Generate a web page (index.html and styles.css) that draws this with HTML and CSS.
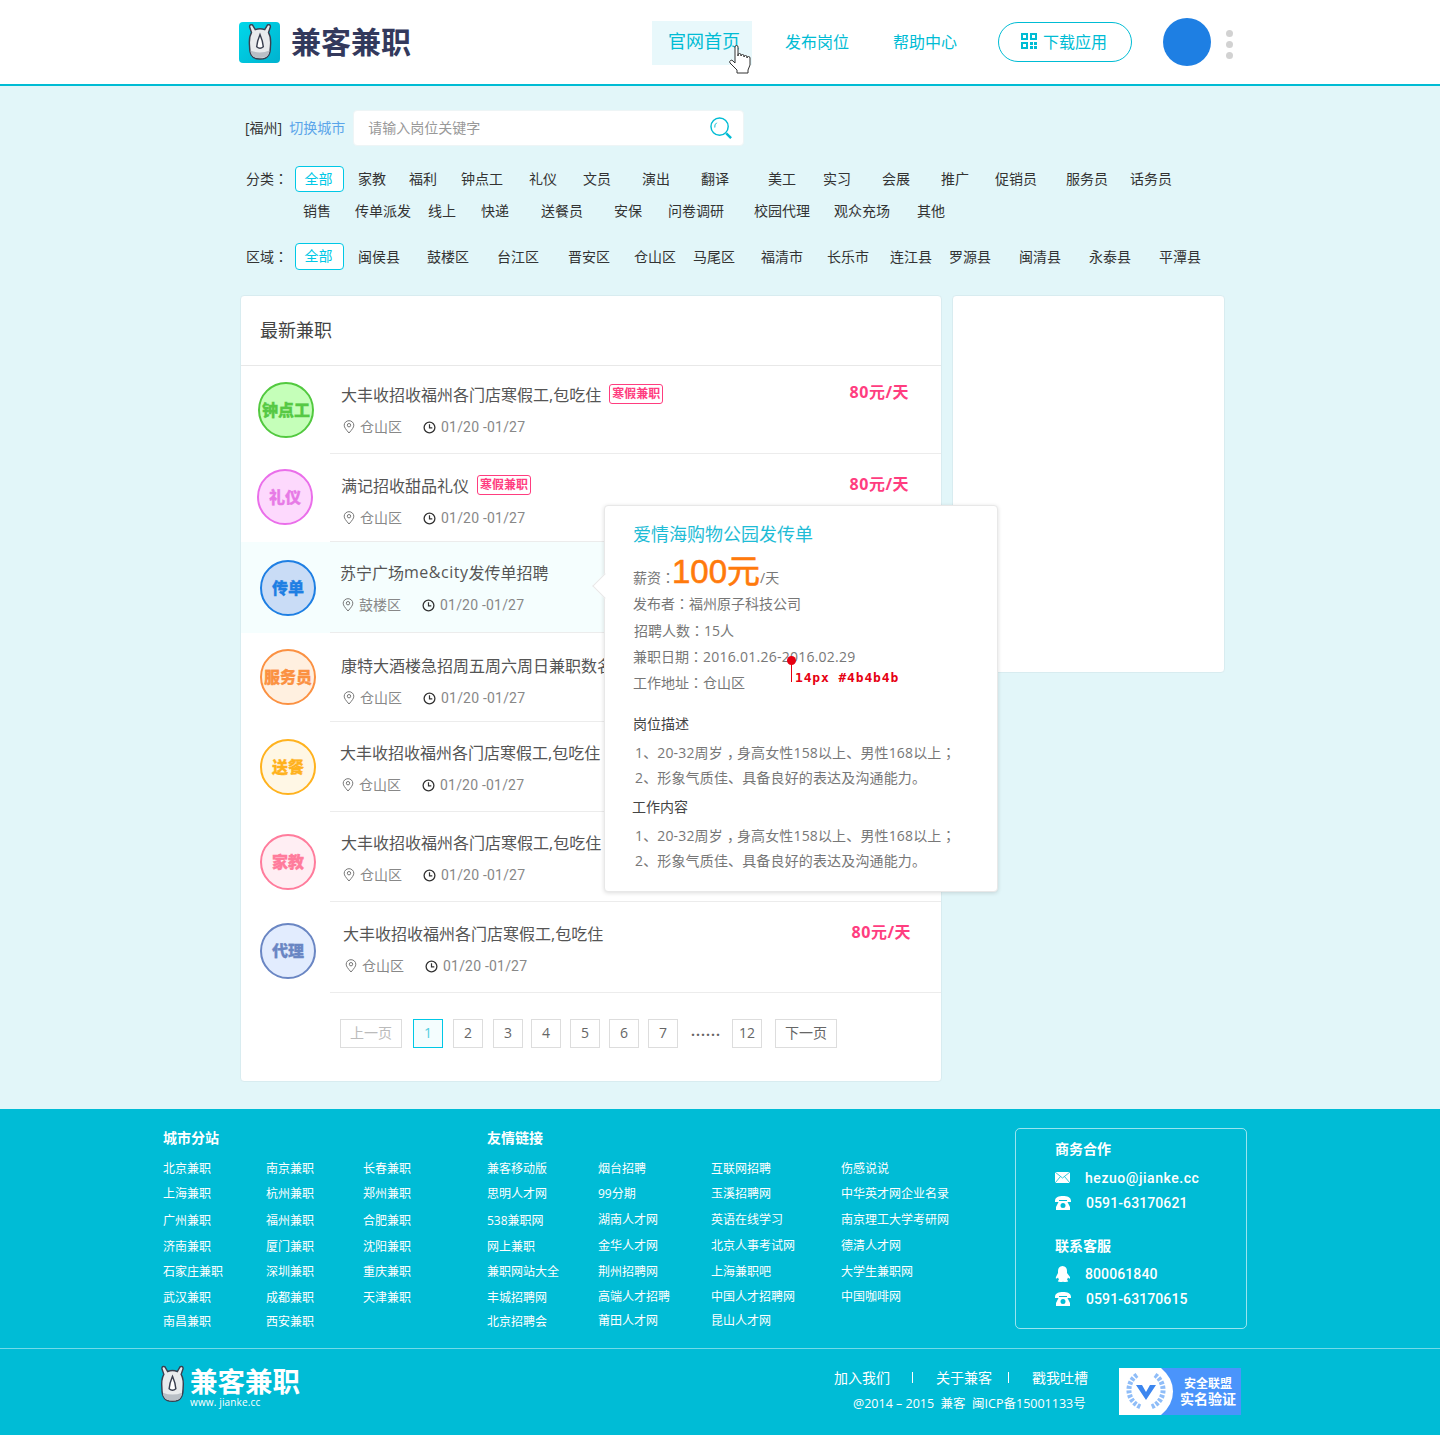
FILE: index.html
```html
<!DOCTYPE html>
<html lang="zh-CN">
<head>
    <meta charset="UTF-8">
    <meta name="viewport" content="width=device-width, initial-scale=1.0">
    <title>兼客兼职</title>
    <link rel="stylesheet" href="styles.css">
</head>
<body>
    <svg class="defs" width="0" height="0">
        <symbol id="rhino" viewBox="0 0 26 38">
            <path d="M4 9L2 3Q2 0 5 1L8 6Q13 4 18 6L21 1Q24 0 24 3L22 9Q25 14 24 24Q24 30 22 33Q20 37 13 37Q6 37 4 33Q2 30 2 24Q1 14 4 9Z" fill="#e9ebed" stroke="#3a3f4f" stroke-width="1.5"/>
            <path d="M3 28Q13 32 23 28Q23 36 13 36Q3 36 3 28Z" fill="#b9bfc6"/>
            <path d="M13 11Q10 18 9.5 24Q13 27 16.5 24Q16 18 13 11Z" fill="#fff" stroke="#3a3f4f" stroke-width="1.5"/>
        </symbol>
        <symbol id="pin" viewBox="0 0 12 14">
            <path d="M6 13C3 9.500 1.200 7.500 1.200 5.200a4.800 4.500 0 0 1 9.600 0C10.800 7.500 9 9.500 6 13Z" fill="none" stroke="#777" stroke-width="1"/>
            <circle cx="6" cy="5.200" r="1.700" fill="none" stroke="#777" stroke-width="1"/>
        </symbol>
        <symbol id="clock" viewBox="0 0 13 13">
            <circle cx="6.500" cy="6.500" r="5.400" fill="none" stroke="#333" stroke-width="1.300"/>
            <path d="M6.500 3.200V6.800H9.300" fill="none" stroke="#333" stroke-width="1.200"/>
        </symbol>
        <symbol id="phone" viewBox="0 0 16 14">
            <path d="M0 5C0 1 4 0 8 0s8 1 8 5v1h-4V4H4v2H0Z" fill="#fff"/>
            <path fill-rule="evenodd" d="M4 5h8l3 6v3H1v-3Zm4 2a2.500 2.500 0 1 0 0 5 2.500 2.500 0 0 0 0-5Z" fill="#fff"/>
        </symbol>
    </svg>

    <header class="top">
        <a class="logo">
            <span class="logo-icon"><svg width="26" height="36"><use href="#rhino"/></svg></span>
            <span class="logo-text">兼客兼职</span>
        </a>
        <nav class="nav">
            <a class="nav-item active">官网首页</a>
            <a class="nav-item second">发布岗位</a>
            <a class="nav-item third">帮助中心</a>
        </nav>
        <a class="download">
            <svg width="16" height="16" viewBox="0 0 16 16" fill="#00bcd4">
                <path fill-rule="evenodd" d="M0 0h7v7H0ZM2 2v3h3V2ZM9 0h7v7H9ZM11 2v3h3V2ZM0 9h7v7H0ZM2 11v3h3v-3Z"/>
                <path d="M9 9h3v3H9ZM13 9h3v3h-3ZM9 13h3v3H9ZM13 13h3v3h-3Z"/>
            </svg>
            下载应用
        </a>
        <span class="avatar"></span>
        <span class="dots"><i></i><i></i><i></i></span>
        <svg class="cursor" width="24" height="31" viewBox="0 0 24 31">
            <path d="M7 3a1.500 1.500 0 0 1 3 0v9-1a1.500 1.500 0 0 1 3 0v1a1.500 1.500 0 0 1 3 0v1a1.500 1.500 0 0 1 3 0v1a1.500 1.500 0 0 1 3 0v7l-2 5v3H9v-3L2 19a1.700 1.700 0 0 1 3-2l2 2Z" fill="#fff" stroke="#333" stroke-width="1"/>
        </svg>
    </header>

    <main class="main">
        <div class="search-row">
            <span class="city">[福州]</span>
            <a class="switch">切换城市</a>
            <div class="search-box">
                <span class="placeholder">请输入岗位关键字</span>
                <svg width="23" height="23" viewBox="0 0 24 24" fill="none" stroke="#00bcd4">
                    <circle cx="10" cy="10" r="9" stroke-width="1.500"/>
                    <path d="M5 11a5 5 0 0 1 2-5" stroke-width="1"/>
                    <path d="M17 17l5 5" stroke-width="2.500"/>
                </svg>
            </div>
        </div>

        <div class="filter filter-one">
            <span>分类<b class="tc">：</b></span><a class="on">全部</a><a>家教</a><a>福利</a><a>钟点工</a><a>礼仪</a><a>文员</a><a>演出</a><a>翻译</a><a>美工</a><a>实习</a><a>会展</a><a>推广</a><a>促销员</a><a>服务员</a><a>话务员</a>
        </div>
        <div class="filter filter-two">
            <a>销售</a><a>传单派发</a><a>线上</a><a>快递</a><a>送餐员</a><a>安保</a><a>问卷调研</a><a>校园代理</a><a>观众充场</a><a>其他</a>
        </div>
        <div class="filter filter-three">
            <span>区域<b class="tc">：</b></span><a class="on">全部</a><a>闽侯县</a><a>鼓楼区</a><a>台江区</a><a>晋安区</a><a>仓山区</a><a>马尾区</a><a>福清市</a><a>长乐市</a><a>连江县</a><a>罗源县</a><a>闽清县</a><a>永泰县</a><a>平潭县</a>
        </div>

        <div class="content">
            <section class="card list">
                <h2 class="list-title">最新兼职</h2>
                <div class="jobs">
                    <article class="job">
                        <div class="badge-col"><span class="circle green">钟点工</span></div>
                        <div class="job-body">
                            <div class="job-main">
                                <h3>大丰收招收福州各门店寒假工,包吃住<em>寒假兼职</em></h3>
                                <p class="meta"><svg width="12" height="14"><use href="#pin"/></svg><span class="place">仓山区</span><svg width="13" height="13"><use href="#clock"/></svg><span class="date">01/20 -01/27</span></p>
                            </div>
                            <b class="pay">80元/天</b>
                        </div>
                    </article>
                    <article class="job">
                        <div class="badge-col"><span class="circle pink">礼仪</span></div>
                        <div class="job-body">
                            <div class="job-main">
                                <h3>满记招收甜品礼仪<em>寒假兼职</em></h3>
                                <p class="meta"><svg width="12" height="14"><use href="#pin"/></svg><span class="place">仓山区</span><svg width="13" height="13"><use href="#clock"/></svg><span class="date">01/20 -01/27</span></p>
                            </div>
                            <b class="pay">80元/天</b>
                        </div>
                    </article>
                    <article class="job hover">
                        <div class="badge-col"><span class="circle blue">传单</span></div>
                        <div class="job-body">
                            <div class="job-main">
                                <h3>苏宁广场<span class="latin">me&amp;city</span>发传单招聘</h3>
                                <p class="meta"><svg width="12" height="14"><use href="#pin"/></svg><span class="place">鼓楼区</span><svg width="13" height="13"><use href="#clock"/></svg><span class="date">01/20 -01/27</span></p>
                            </div>
                        </div>
                    </article>
                    <article class="job">
                        <div class="badge-col"><span class="circle orange">服务员</span></div>
                        <div class="job-body">
                            <div class="job-main">
                                <h3>康特大酒楼急招周五周六周日兼职数名</h3>
                                <p class="meta"><svg width="12" height="14"><use href="#pin"/></svg><span class="place">仓山区</span><svg width="13" height="13"><use href="#clock"/></svg><span class="date">01/20 -01/27</span></p>
                            </div>
                        </div>
                    </article>
                    <article class="job">
                        <div class="badge-col"><span class="circle yellow">送餐</span></div>
                        <div class="job-body">
                            <div class="job-main">
                                <h3>大丰收招收福州各门店寒假工,包吃住</h3>
                                <p class="meta"><svg width="12" height="14"><use href="#pin"/></svg><span class="place">仓山区</span><svg width="13" height="13"><use href="#clock"/></svg><span class="date">01/20 -01/27</span></p>
                            </div>
                        </div>
                    </article>
                    <article class="job">
                        <div class="badge-col"><span class="circle rose">家教</span></div>
                        <div class="job-body">
                            <div class="job-main">
                                <h3>大丰收招收福州各门店寒假工,包吃住</h3>
                                <p class="meta"><svg width="12" height="14"><use href="#pin"/></svg><span class="place">仓山区</span><svg width="13" height="13"><use href="#clock"/></svg><span class="date">01/20 -01/27</span></p>
                            </div>
                        </div>
                    </article>
                    <article class="job">
                        <div class="badge-col"><span class="circle indigo">代理</span></div>
                        <div class="job-body">
                            <div class="job-main">
                                <h3>大丰收招收福州各门店寒假工,包吃住</h3>
                                <p class="meta"><svg width="12" height="14"><use href="#pin"/></svg><span class="place">仓山区</span><svg width="13" height="13"><use href="#clock"/></svg><span class="date">01/20 -01/27</span></p>
                            </div>
                            <b class="pay">80元/天</b>
                        </div>
                    </article>
                </div>
                <div class="pager">
                    <a class="wide off">上一页</a><a class="cur">1</a><a>2</a><a>3</a><a>4</a><a>5</a><a>6</a><a>7</a><span class="more">······</span><a>12</a><a class="wide">下一页</a>
                </div>

                <aside class="pop">
                    <h4>爱情海购物公园发传单</h4>
                    <p class="salary">薪资<b class="tc">：</b><strong>100元</strong>/天</p>
                    <p class="info">发布者<b class="tc">：</b>福州原子科技公司</p>
                    <p class="info shift">招聘人数<b class="tc">：</b>15人</p>
                    <p class="info">兼职日期<b class="tc">：</b><span class="num">2016.01.26-2016.02.29</span></p>
                    <p class="info">工作地址<b class="tc">：</b>仓山区</p>
                    <h5>岗位描述</h5>
                    <p class="line">1、20-32周岁<b class="comma">，</b>身高女性158以上、男性168以上<b class="tc">；</b></p>
                    <p class="line">2、形象气质佳、具备良好的表达及沟通能力。</p>
                    <h5 class="next">工作内容</h5>
                    <p class="line">1、20-32周岁<b class="comma">，</b>身高女性158以上、男性168以上<b class="tc">；</b></p>
                    <p class="line">2、形象气质佳、具备良好的表达及沟通能力。</p>
                    <span class="mark"><span class="mark-text">14px #4b4b4b</span></span>
                </aside>
            </section>
            <section class="card side"></section>
        </div>
    </main>

    <footer class="foot">
        <div class="foot-top">
            <div class="cities">
                <h6>城市分站</h6>
                <div class="cols">
                    <ul><li>北京兼职</li><li>上海兼职</li><li>广州兼职</li><li>济南兼职</li><li>石家庄兼职</li><li>武汉兼职</li><li>南昌兼职</li></ul>
                    <ul><li>南京兼职</li><li>杭州兼职</li><li>福州兼职</li><li>厦门兼职</li><li>深圳兼职</li><li>成都兼职</li><li>西安兼职</li></ul>
                    <ul><li>长春兼职</li><li>郑州兼职</li><li>合肥兼职</li><li>沈阳兼职</li><li>重庆兼职</li><li>天津兼职</li></ul>
                </div>
            </div>
            <div class="friends">
                <h6>友情链接</h6>
                <div class="cols">
                    <ul><li>兼客移动版</li><li>思明人才网</li><li>538兼职网</li><li>网上兼职</li><li>兼职网站大全</li><li>丰城招聘网</li><li>北京招聘会</li></ul>
                    <ul class="alt"><li>烟台招聘</li><li>99分期</li><li>湖南人才网</li><li>金华人才网</li><li>荆州招聘网</li><li>高端人才招聘</li><li>莆田人才网</li></ul>
                    <ul class="alt"><li>互联网招聘</li><li>玉溪招聘网</li><li>英语在线学习</li><li>北京人事考试网</li><li>上海兼职吧</li><li>中国人才招聘网</li><li>昆山人才网</li></ul>
                    <ul class="alt"><li>伤感说说</li><li>中华英才网企业名录</li><li>南京理工大学考研网</li><li>德清人才网</li><li>大学生兼职网</li><li>中国咖啡网</li></ul>
                </div>
            </div>
            <div class="contact">
                <h6>商务合作</h6>
                <p><svg width="15" height="11" viewBox="0 0 15 11"><path d="M0 0h15v11H0Z" fill="#fff"/><path d="M0 0l7.500 6L15 0M0 11l5.500-6.500M15 11L9.500 4.500" fill="none" stroke="#00bcd6" stroke-width=".8"/></svg><span class="mail">hezuo@jianke.cc</span></p>
                <p><svg width="16" height="14"><use href="#phone"/></svg><span>0591-63170621</span></p>
                <h6 class="gap">联系客服</h6>
                <p><svg width="15" height="16" viewBox="0 0 15 16"><path d="M7.500 0C4.500 0 3 2.200 3 5v2L1 11c-.5 1.500 0 2 1.500 1L3 11.500 4 14c-1 .5-1.500 1-1 1.500.8.500 3 .5 5 .2 2 .3 4.200.3 5-.2.500-.5 0-1-1-1.500l1-2.500.5.500c1.500 1 2 .5 1.500-1L12 7V5c0-2.800-1.500-5-4.500-5Z" fill="#fff"/></svg><span>800061840</span></p>
                <p><svg width="16" height="14"><use href="#phone"/></svg><span>0591-63170615</span></p>
            </div>
        </div>
        <div class="foot-bottom">
            <div class="foot-brand">
                <svg width="25" height="38"><use href="#rhino"/></svg>
                <div>
                    <div class="foot-name">兼客兼职</div>
                    <div class="foot-url">www. jianke.cc</div>
                </div>
            </div>
            <div class="foot-info">
                <div class="foot-links"><a>加入我们</a><i></i><a>关于兼客</a><i></i><a>戳我吐槽</a></div>
                <div class="copy">@2014 – 2015&nbsp; 兼客&nbsp; 闽ICP备15001133号</div>
            </div>
            <div class="safe">
                <svg width="56" height="47" viewBox="0 0 56 47">
                    <path d="M0 0H42Q54 10 54 23.500T42 47H0Z" fill="#fff"/>
                    <path d="M18 7A18 18 0 0 0 22 39" fill="none" stroke="#8fbdf8" stroke-width="5" stroke-dasharray="3 1.500"/>
                    <path d="M36 7A18 18 0 0 1 32 39" fill="none" stroke="#8fbdf8" stroke-width="5" stroke-dasharray="3 1.500"/>
                    <path d="M17 17h6l4 7 4-7h6l-10 15Z" fill="#3c86ef"/>
                </svg>
                <div class="safe-text"><span>安全联盟</span><span class="big">实名验证</span></div>
            </div>
        </div>
    </footer>
</body>
</html>
```

FILE: styles.css
```css
* {
    box-sizing: border-box;
}

body {
    margin: 0;
    font-family: "Open Sans", "Noto Sans CJK SC", sans-serif;
    font-size: 14px;
    color: #333;
    background-color: #e2f6f9;
}

h2, h3, h4, h5, h6, p, ul {
    margin: 0;
    padding: 0;
    font-weight: normal;
}

ul {
    list-style: none;
}

.defs {
    position: absolute;
}

/* punctuation that sits in the middle of its box */
.tc {
    display: inline-block;
    font-family: "Noto Sans CJK TC", sans-serif;
    font-weight: normal;
    letter-spacing: 0;
}

.comma {
    display: inline-block;
    padding-left: 4px;
    font-weight: normal;
    letter-spacing: -4px;
}

/* header */
.top {
    position: relative;
    display: flex;
    align-items: center;
    height: 86px;
    padding-left: 239px;
    background-color: #fff;
    border-bottom: 2px solid #00bcd4;
}

.logo {
    display: flex;
    align-items: center;
    gap: 11px;
}

.logo-icon {
    display: flex;
    align-items: center;
    justify-content: center;
    width: 41px;
    height: 41px;
    border-radius: 4px;
    background: linear-gradient(135deg, #00d8ea, #00b2cf);
}

.logo-text {
    margin-bottom: 4px;
    font-family: "Noto Sans CJK SC", sans-serif;
    font-size: 30px;
    font-weight: 700;
    line-height: 40px;
    color: #33395c;
}

.nav {
    display: flex;
    align-items: center;
    margin-left: 241px;
    font-size: 16px;
    color: #00bcd4;
}

.nav-item.active {
    width: 100px;
    height: 44px;
    padding-left: 16px;
    margin-top: 2px;
    line-height: 40px;
    font-size: 18px;
    background-color: #e8f8fb;
}

.nav-item.second {
    margin: 0 0 2px 33px;
}

.nav-item.third {
    margin: 0 0 2px 44px;
}

.download {
    display: flex;
    align-items: center;
    gap: 6px;
    width: 134px;
    height: 40px;
    margin-left: 41px;
    padding: 0 0 2px 22px;
    font-size: 16px;
    color: #00bcd4;
    border: 1px solid #00bcd4;
    border-radius: 20px;
}

.avatar {
    width: 48px;
    height: 48px;
    margin-left: 31px;
    border-radius: 50%;
    background-color: #1e7fe3;
}

.dots {
    display: flex;
    flex-direction: column;
    gap: 4px;
    margin: 4px 0 0 15px;
}

.dots i {
    width: 7px;
    height: 7px;
    border-radius: 50%;
    background-color: #d2d2d2;
}

.cursor {
    position: absolute;
    left: 728px;
    top: 44px;
}

/* search and filters */
.main {
    padding: 24px 0 27px 245px;
}

.search-row {
    display: flex;
    align-items: center;
    height: 36px;
}

.city, .switch, .placeholder {
    margin-bottom: 2px;
}

.switch {
    margin-left: 7px;
    color: #5aa5ea;
}

.search-box {
    display: flex;
    align-items: center;
    justify-content: space-between;
    width: 391px;
    height: 36px;
    margin-left: 8px;
    padding: 0 10px 0 14px;
    background-color: #fff;
    border-radius: 4px;
    border: 1px solid #eef5f6;
}

.placeholder {
    color: #999;
}

.filter {
    display: grid;
    align-items: center;
    height: 26px;
    padding-left: 1px;
}

.filter a, .filter span {
    margin-bottom: 2px;
    white-space: nowrap;
}

.filter-one {
    margin-top: 20px;
    grid-template-columns: 49px 63px 51px 52px 68px 54px 59px 59px 67px 55px 59px 59px 54px 71px 64px auto;
}

.filter-two {
    margin-top: 6px;
    padding-left: 58px;
    grid-template-columns: 52px 73px 53px 60px 73px 54px 86px 80px 83px auto;
}

.filter-three {
    height: 27px;
    margin-top: 19px;
    grid-template-columns: 49px 63px 69px 70px 71px 66px 59px 68px 66px 63px 59px 70px 70px 70px auto;
}

.filter .on {
    width: 49px;
    height: 100%;
    margin-bottom: 0;
    padding-right: 2px;
    line-height: 24px;
    text-align: center;
    color: #00c8e6;
    background-color: #fff;
    border: 1px solid #00c8e6;
    border-radius: 4px;
}

/* list */
.content {
    display: flex;
    align-items: flex-start;
    gap: 10px;
    margin-top: 25px;
    margin-left: -5px;
}

.card {
    background-color: #fff;
    border: 1px solid #d8ecf0;
    border-radius: 4px;
}

.list {
    position: relative;
    width: 702px;
    height: 787px;
}

.side {
    width: 273px;
    height: 378px;
}

.list-title {
    height: 70px;
    padding-left: 19px;
    line-height: 68px;
    font-size: 18px;
    color: #444;
    border-bottom: 1px solid #e8e8e8;
}

.job {
    display: flex;
    height: var(--row-h);
}

.job:nth-child(1) { --row-h: 88px; --av-x: 17px; --av-y: 16px; --pad-t: 16px; --pad-l: 11px; --pay-t: -2px; --pay-r: 32px; }
.job:nth-child(2) { --row-h: 88px; --av-x: 16px; --av-y: 15px; --pad-t: 19px; --pad-l: 11px; --pay-t: -1px; --pay-r: 32px; }
.job:nth-child(3) { --row-h: 91px; --av-x: 19px; --av-y: 18px; --pad-t: 18px; --pad-l: 10px; }
.job:nth-child(4) { --row-h: 89px; --av-x: 19px; --av-y: 16px; --pad-t: 20px; --pad-l: 11px; }
.job:nth-child(5) { --row-h: 90px; --av-x: 19px; --av-y: 17px; --pad-t: 18px; --pad-l: 10px; }
.job:nth-child(6) { --row-h: 90px; --av-x: 19px; --av-y: 22px; --pad-t: 18px; --pad-l: 11px; }
.job:nth-child(7) { --row-h: 91px; --av-x: 19px; --av-y: 21px; --pad-t: 19px; --pad-l: 13px; --pay-t: -1px; --pay-r: 30px; }

/* the long title runs under the popup */
.job:nth-child(4) h3 {
    width: 263px;
    overflow: hidden;
}

.job.hover {
    background-color: #f5fefe;
}

.badge-col {
    flex: 0 0 89px;
    padding: var(--av-y) 0 0 var(--av-x);
}

.circle {
    display: flex;
    align-items: center;
    justify-content: center;
    width: 56px;
    height: 56px;
    padding-bottom: 2px;
    font-family: "Noto Sans CJK SC", sans-serif;
    font-size: 16px;
    font-weight: 900;
    white-space: nowrap;
    border: 2px solid;
    border-radius: 50%;
    -webkit-text-stroke: .3px currentColor;
}

.green { color: #56c944; background-color: #c5ffb9; border-color: #52c93f; }
.pink { color: #e77ae6; background-color: #fdd9fd; border-color: #ea6eea; }
.blue { color: #1e7fe3; background-color: #c9dcf6; border-color: #1e7fe3; }
.orange { color: #fb9142; background-color: #fff0e0; border-color: #fb9142; }
.yellow { color: #ffb21e; background-color: #fff7e5; border-color: #ffb21e; }
.rose { color: #ff7c9c; background-color: #ffeef3; border-color: #ff7c9c; }
.indigo { color: #6a86c3; background-color: #e2ecfe; border-color: #6a86c3; }

.job-body {
    display: flex;
    flex: 1;
    min-width: 0;
    padding: var(--pad-t) var(--pay-r, 32px) 0 var(--pad-l);
    border-bottom: 1px solid #ececec;
}

.job-main {
    flex: 1;
    min-width: 0;
}

.job-main h3 {
    display: flex;
    align-items: center;
    height: 24px;
    font-size: 16px;
    color: #555;
    white-space: nowrap;
}

.latin {
    letter-spacing: .5px;
}

.job-main em {
    height: 20px;
    margin-left: 8px;
    padding: 0 2px;
    line-height: 18px;
    font-size: 12px;
    font-weight: 700;
    font-style: normal;
    color: #ff3d7f;
    border: 1px solid #ff3d7f;
    border-radius: 3px;
}

.meta {
    display: flex;
    align-items: center;
    height: 20px;
    margin-top: 11px;
    padding-left: 2px;
    color: #888;
}

.place {
    width: 63px;
    margin: 0 0 2px 5px;
}

.date {
    margin-left: 5px;
    font-family: Roboto, sans-serif;
    letter-spacing: .2px;
}

.pay {
    flex: 0 0 59px;
    margin-top: var(--pay-t);
    height: 24px;
    line-height: 24px;
    font-size: 16px;
    letter-spacing: .5px;
    color: #ff3d7f;
    white-space: nowrap;
}

.pager {
    display: grid;
    grid-template-columns: 73px 40px 40px 38px 39px 39px 39px 43px 41px 43px 62px;
    height: 28px;
    margin: 26px 0 0 99px;
    color: #666;
}

.pager a {
    width: 30px;
    line-height: 26px;
    text-align: center;
    border: 1px solid #ddd;
}

.pager .wide {
    width: 62px;
}

.pager .off {
    color: #bbb;
}

.pager .cur {
    color: #4fcde0;
    background-color: #f4fdfe;
    border-color: #00c8e6;
}

.pager .more {
    padding-top: 3px;
    line-height: 26px;
    letter-spacing: 1px;
    font-weight: 700;
}

/* popup */
.pop {
    position: absolute;
    left: 363px;
    top: 209px;
    width: 394px;
    height: 387px;
    padding: 15px 0 0 28px;
    color: #777;
    background-color: #fff;
    border: 1px solid #e8e8e8;
    border-radius: 4px;
    box-shadow: 0 1px 4px rgba(0, 0, 0, .14);
}

.pop::before {
    content: "";
    position: absolute;
    left: -9px;
    top: 71px;
    width: 17px;
    height: 17px;
    background-color: #fff;
    border-left: 1px solid #e8e8e8;
    border-bottom: 1px solid #e8e8e8;
    transform: rotate(45deg);
}

.pop h4 {
    height: 26px;
    line-height: 26px;
    font-size: 18px;
    color: #1fbcd6;
}

.salary {
    display: flex;
    align-items: baseline;
    height: 40px;
    margin-top: 3px;
    line-height: 44px;
}

.salary .tc {
    letter-spacing: -3px;
}

.salary strong {
    font-family: "Liberation Sans", "Noto Sans CJK SC", sans-serif;
    font-size: 33px;
    font-weight: 400;
    color: #ff7a0c;
    -webkit-text-stroke: .6px #ff7a0c;
}

.info {
    height: 26px;
    line-height: 26px;
}

.info.shift {
    margin-top: 1px;
    padding-left: 1px;
}

.num {
    letter-spacing: .25px;
}

.pop h5 {
    height: 26px;
    margin: 16px 0 3px;
    line-height: 26px;
    font-size: 14px;
    color: #444;
}

.pop h5.next {
    margin: 4px 0 3px -1px;
}

.line {
    height: 25px;
    padding-left: 2px;
    line-height: 25px;
    letter-spacing: .15px;
    white-space: nowrap;
}

.mark {
    position: absolute;
    left: 186px;
    top: 150px;
    width: 1px;
    height: 26px;
    background-color: #e60012;
}

.mark::before {
    content: "";
    position: absolute;
    left: -4px;
    top: 0;
    width: 9px;
    height: 9px;
    border-radius: 50%;
    background-color: #e60012;
}

.mark-text {
    position: absolute;
    left: 4px;
    top: 14px;
    font-family: "DejaVu Sans Mono", monospace;
    font-size: 13px;
    font-weight: 700;
    line-height: 16px;
    letter-spacing: .85px;
    color: #e60012;
    white-space: nowrap;
}

/* footer */
.foot {
    height: 326px;
    color: #fff;
    background-color: #00bcd6;
}

.foot-top {
    display: flex;
    height: 240px;
    padding: 19px 0 0 163px;
    border-bottom: 1px solid rgba(255, 255, 255, .45);
}

.foot h6 {
    height: 20px;
    line-height: 20px;
    font-size: 14px;
    font-weight: 700;
}

.cities {
    width: 324px;
}

.friends {
    width: 528px;
}

.cols {
    display: flex;
    margin-top: 11px;
    font-size: 12px;
}

.cols ul {
    display: grid;
    grid-template-rows: 25px 27px 26px 25px 26px 24px 20px;
    line-height: 20px;
    white-space: nowrap;
}

.cols ul.alt {
    grid-template-rows: 25px 26px 26px 26px 25px 24px 20px;
}

.cities .cols ul:nth-child(1) { width: 103px; }
.cities .cols ul:nth-child(2) { width: 97px; }
.friends .cols ul:nth-child(1) { width: 111px; }
.friends .cols ul:nth-child(2) { width: 113px; }
.friends .cols ul:nth-child(3) { width: 130px; }

.contact {
    width: 232px;
    height: 201px;
    padding: 10px 0 0 39px;
    border: 1px solid rgba(255, 255, 255, .6);
    border-radius: 5px;
}

.contact p {
    display: flex;
    align-items: center;
    height: 25px;
    font-family: Roboto, sans-serif;
    font-size: 14px;
    font-weight: 500;
    letter-spacing: .1px;
}

.contact h6 {
    margin-bottom: 6px;
}

.contact h6.gap {
    margin: 21px 0 5px;
}

.contact svg {
    flex: 0 0 auto;
}

.contact span {
    margin-left: 15px;
}

.contact .mail {
    letter-spacing: .55px;
}

.foot-bottom {
    display: flex;
    padding-left: 160px;
}

.foot-brand {
    display: flex;
    gap: 5px;
    width: 674px;
    margin-top: 16px;
}

.foot-name {
    height: 30px;
    line-height: 30px;
    font-family: "Noto Sans CJK SC", sans-serif;
    font-size: 27.500px;
    font-weight: 700;
    white-space: nowrap;
}

.foot-url {
    margin-top: 1px;
    line-height: 12px;
    font-family: "Open Sans", sans-serif;
    font-size: 10px;
    letter-spacing: .15px;
    white-space: nowrap;
}

.foot-info {
    width: 285px;
    padding-top: 18px;
}

.foot-links {
    display: grid;
    grid-template-columns: 78px 24px 72px 24px auto;
    align-items: center;
    height: 20px;
    white-space: nowrap;
}

.foot-links i {
    width: 1px;
    height: 11px;
    background-color: #fff;
}

.copy {
    height: 20px;
    margin-top: 7px;
    padding-left: 19px;
    line-height: 20px;
    font-size: 12.500px;
    white-space: nowrap;
}

.safe {
    display: flex;
    width: 122px;
    height: 47px;
    margin-top: 19px;
    background-color: #4a94fb;
}

.safe-text {
    display: flex;
    flex-direction: column;
    align-items: center;
    justify-content: center;
    flex: 1;
    padding-bottom: 2px;
    line-height: 15px;
    font-size: 12px;
    font-weight: 700;
}

.safe-text .big {
    font-size: 14px;
}
```
